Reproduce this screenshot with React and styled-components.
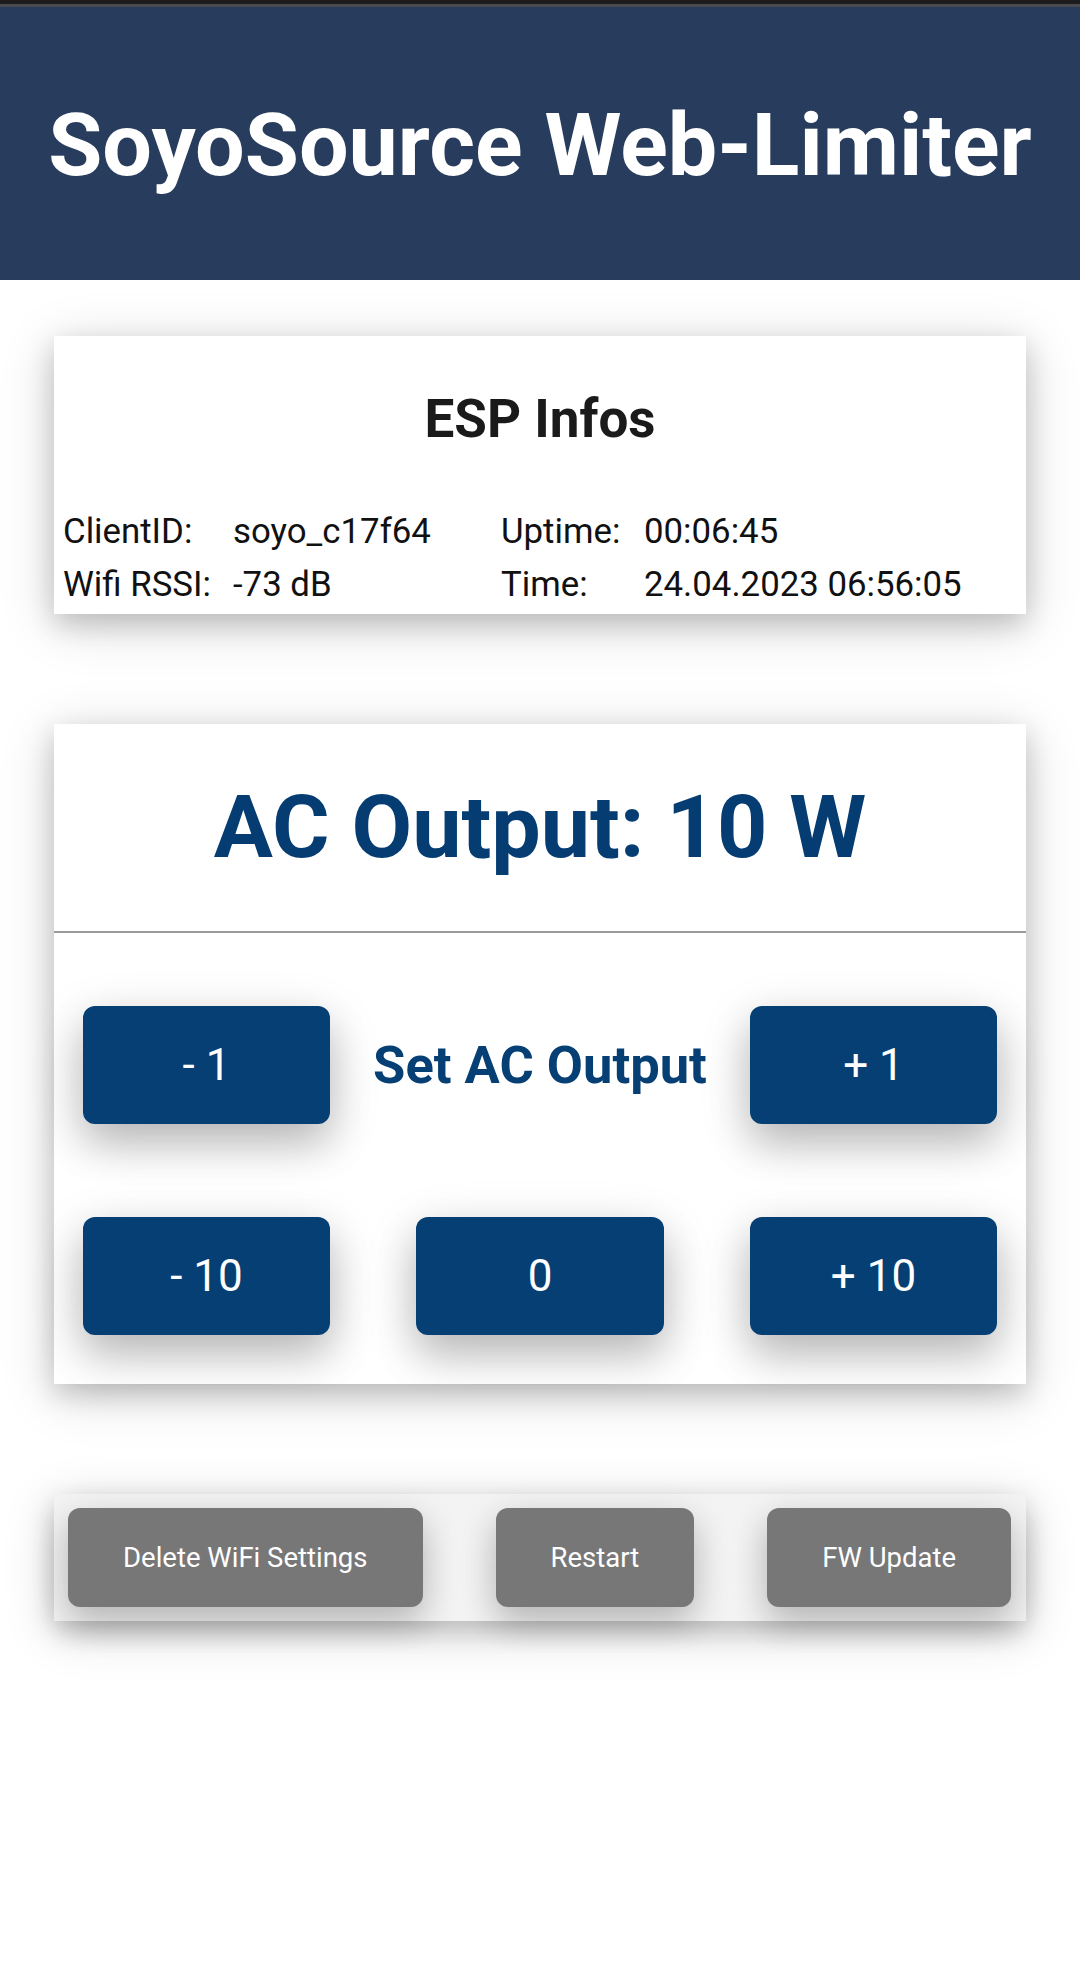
import styled, { createGlobalStyle } from "styled-components";

const Global = createGlobalStyle`
  html, body {
    margin: 0;
    padding: 0;
    background: #ffffff;
    font-family: Roboto, "Liberation Sans", sans-serif;
  }
  * { box-sizing: border-box; }
`;

const Page = styled.div`
  width: 1080px;
  min-height: 1968px;
  background: #fff;
  border-top: 4px solid #1c1c1e;
`;

const Header = styled.header`
  height: 276px;
  border-top: 3px solid #4a4b4f;
  background: #283c5d;
  display: flex;
  align-items: center;
  justify-content: center;
`;

const Title = styled.h1`
  margin: 0;
  color: #fff;
  font-size: 88px;
  font-weight: 700;
  line-height: 1;
  padding-top: 2px;
`;

const Card = styled.section`
  width: 972px;
  margin: ${(p) => p.$top}px auto 0;
  background: ${(p) => p.$bg || "#fff"};
  box-shadow: 0 10px 26px 0 rgba(0, 0, 0, 0.18), 0 10px 52px 0 rgba(0, 0, 0, 0.16);
`;

const InfoHead = styled.h2`
  margin: 0;
  padding-top: 52px;
  text-align: center;
  font-size: 53px;
  font-weight: 700;
  line-height: 1.2;
  color: #1a1a1a;
`;

const InfoGrid = styled.div`
  margin-top: 53px;
  padding: 0 0 3px 9px;
  display: grid;
  grid-template-columns: 170px 268px 143px 1fr;
  font-size: 34.8px;
  line-height: 53px;
  color: #111;
`;

const PowerHead = styled.h2`
  margin: 0;
  padding: 50px 0 52px;
  text-align: center;
  font-size: 88px;
  font-weight: 700;
  line-height: 1.2;
  color: #053d72;
  border-bottom: 2px solid #9a9a9a;
`;

const Controls = styled.div`
  padding: 73px 29px 49px;
  display: grid;
  grid-template-columns: 247px minmax(0, 1fr) 247px;
  column-gap: 86px;
  row-gap: 93px;
  align-items: center;
`;

const StepButton = styled.button`
  height: 118px;
  border: none;
  border-radius: 12px;
  background: #063f74;
  color: #fff;
  font-family: Roboto, "Liberation Sans", sans-serif;
  font-size: 44px;
  font-weight: 400;
  cursor: pointer;
  box-shadow: 0 20px 40px 0 rgba(0, 0, 0, 0.18), 0 14px 52px 0 rgba(0, 0, 0, 0.15);
`;

const SetLabel = styled.div`
  display: flex;
  justify-content: center;
  font-size: 52.5px;
  font-weight: 700;
  color: #063f74;
  white-space: nowrap;
`;

const Tools = styled.div`
  padding: 14px 15px 14px 14px;
  display: flex;
  justify-content: space-between;
`;

const ToolButton = styled.button`
  height: 99px;
  padding: 0 55px;
  border: none;
  border-radius: 12px;
  background: #777777;
  color: #fff;
  font-family: Roboto, "Liberation Sans", sans-serif;
  font-size: 27.5px;
  cursor: pointer;
  box-shadow: 0 16px 32px 0 rgba(0, 0, 0, 0.16), 0 10px 40px 0 rgba(0, 0, 0, 0.12);
`;

const info = [
  ["ClientID:", "soyo_c17f64", "Uptime:", "00:06:45"],
  ["Wifi RSSI:", "-73 dB", "Time:", "24.04.2023 06:56:05"],
];

const App = () => {
  return (
    <Page>
      <Global />
      <Header>
        <Title>SoyoSource Web-Limiter</Title>
      </Header>

      <Card $top={56}>
        <InfoHead>ESP Infos</InfoHead>
        <InfoGrid>
          {info.flat().map((t, i) => (
            <span key={i}>{t}</span>
          ))}
        </InfoGrid>
      </Card>

      <Card $top={110}>
        <PowerHead>AC Output: 10 W</PowerHead>
        <Controls>
          <StepButton>- 1</StepButton>
          <SetLabel>Set AC Output</SetLabel>
          <StepButton>+ 1</StepButton>
          <StepButton>- 10</StepButton>
          <StepButton>0</StepButton>
          <StepButton>+ 10</StepButton>
        </Controls>
      </Card>

      <Card $top={110} $bg="#f3f3f3">
        <Tools>
          <ToolButton>Delete WiFi Settings</ToolButton>
          <ToolButton>Restart</ToolButton>
          <ToolButton>FW Update</ToolButton>
        </Tools>
      </Card>
    </Page>
  );
};

export default App;
